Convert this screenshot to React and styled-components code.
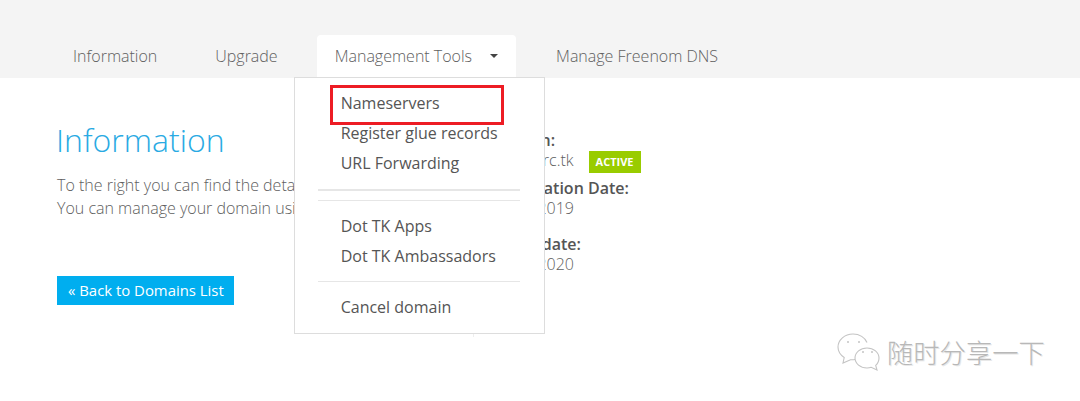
import styled, { createGlobalStyle } from "styled-components";

const GlobalStyle = createGlobalStyle`
    html, body {
        margin: 0;
        background: #fff;
        overflow: hidden;
    }
    body {
        font-family: "Open Sans", "Liberation Sans", "Noto Sans CJK SC", sans-serif;
    }
`

function WeChatIcon() {
    return (
        <svg width="46" height="40" viewBox="0 0 46 40" fill="none" stroke="#c4c4c4" strokeWidth="1.1">
            <path d="M19 27.500c-1.400.3-3 .4-4.500.2L7 31l1.200-5.500C4.500 23 2 19.500 2 15 2 7.800 8.700 2 17 2c6.500 0 12 3.500 14 8.500" />
            <path d="M43 26c0-5.500-5.400-10-12-10s-12 4.500-12 10 5.400 10 12 10c1.500 0 2.900-.2 4.200-.7l5.800 2.700-1.300-4.600C41.700 31.600 43 29 43 26z" />
            <circle cx="12" cy="10" r="1" fill="#c4c4c4" stroke="none" />
            <circle cx="23" cy="10" r="1" fill="#c4c4c4" stroke="none" />
            <circle cx="27" cy="20" r="1" fill="#c4c4c4" stroke="none" />
            <circle cx="36" cy="20" r="1" fill="#c4c4c4" stroke="none" />
        </svg>
    );
}

export default function App() {
    return (
        <Page>
            <GlobalStyle />
            <TabBar>
                <Tab>Information</Tab>
                <Tab>Upgrade</Tab>
                <Tab $active>
                    Management Tools
                    <Caret />
                    <Dropdown>
                        <MenuItem>Nameservers</MenuItem>
                        <MenuItem>Register glue records</MenuItem>
                        <MenuItem>URL Forwarding</MenuItem>
                        <ThickDivider />
                        <ThinDivider />
                        <MenuGap />
                        <MenuItem>Dot TK Apps</MenuItem>
                        <MenuItem>Dot TK Ambassadors</MenuItem>
                        <ThinDivider $after />
                        <MenuItem>Cancel domain</MenuItem>
                        <Highlight />
                    </Dropdown>
                </Tab>
                <Tab>Manage Freenom DNS</Tab>
            </TabBar>
            <Content>
                <LeftColumn>
                    <Heading>Information</Heading>
                    <Description>
                        To the right you can find the details of your domain.<br />
                        You can manage your domain using the tabs above.
                    </Description>
                    <BackButton>« Back to Domains List</BackButton>
                </LeftColumn>
                <RightColumn>
                    <Field>
                        <Label>Domain:</Label>
                        <Value>hxxxxxirc.tk <Badge>ACTIVE</Badge></Value>
                    </Field>
                    <Field>
                        <Label>Registration Date:</Label>
                        <Value>01/12/2019</Value>
                    </Field>
                    <Field $wide>
                        <Label>Expiry date:</Label>
                        <Value>01/12/2020</Value>
                    </Field>
                </RightColumn>
            </Content>
            <Watermark>
                <WeChatIcon />
                <WatermarkText>随时分享一下</WatermarkText>
            </Watermark>
        </Page>
    );
}

const Page = styled.div`
    position: relative;
    width: 1080px;
    height: 401px;
    overflow: hidden;
    background: #fff;
`

const TabBar = styled.nav`
    display: flex;
    align-items: flex-end;
    gap: 22px;
    height: 78px;
    padding-left: 55px;
    box-sizing: border-box;
    background: #f4f4f4;
`

const Tab = styled.div`
    position: relative;
    display: flex;
    align-items: center;
    height: 43px;
    padding: 0 18px 2px;
    margin-left: ${props => props.$active ? "-1px" : "0"};
    box-sizing: border-box;
    font-size: 16px;
    font-weight: 300;
    white-space: nowrap;
    color: #606060;
    border-radius: 4px 4px 0 0;
    background: ${props => props.$active ? "#fff" : "transparent"};
`

const Caret = styled.span`
    width: 0;
    height: 0;
    margin-left: 18px;
    border-left: 4px solid transparent;
    border-right: 4px solid transparent;
    border-top: 4px solid #444;
`

const Dropdown = styled.div`
    position: absolute;
    top: 42px;
    left: -23px;
    width: 251px;
    height: 257px;
    padding-top: 10px;
    box-sizing: border-box;
    background: #fff;
    border: 1px solid #ddd;
    z-index: 2;
`

const MenuItem = styled.div`
    height: 30px;
    padding-left: 46px;
    font-size: 16px;
    line-height: 30px;
    font-weight: 400;
    color: #555;
`

const ThickDivider = styled.div`
    height: 2px;
    margin: 11px 24px 0 23px;
    background: #e6e6e6;
`

const ThinDivider = styled.div`
    height: 1px;
    margin: ${props => props.$after ? "10px 24px 10px 23px" : "9px 24px 0 23px"};
    background: #e6e6e6;
`

const MenuGap = styled.div`
    height: 10px;
`

const Highlight = styled.div`
    position: absolute;
    top: 7px;
    left: 35px;
    width: 174px;
    height: 40px;
    box-sizing: border-box;
    border: 3px solid #ed1c24;
`

const Content = styled.main`
    display: flex;
    padding-left: 57px;
`

const LeftColumn = styled.section`
    width: 416px;
    flex-shrink: 0;
`

const Heading = styled.h1`
    margin: 40px 0 0 -1px;
    font-size: 32px;
    line-height: 44px;
    font-weight: 300;
    color: #29aae3;
`

const Description = styled.p`
    margin: 12px 0 0;
    font-size: 16px;
    line-height: 23px;
    font-weight: 300;
    color: #606060;
    white-space: nowrap;
`

const BackButton = styled.a`
    display: inline-block;
    margin-top: 56px;
    padding: 0 10px 0 11px;
    height: 29px;
    font-size: 14.900px;
    line-height: 29px;
    color: #fff;
    background: #00aeef;
`

const RightColumn = styled.section`
    height: 259px;
    padding: 52px 0 0 16px;
    box-sizing: border-box;
    border-left: 1px solid #eee;
`

const Field = styled.div`
    margin-bottom: ${props => props.$wide ? "0" : "8px"};
    &:nth-child(2) {
        margin-bottom: 16px;
    }
`

const Label = styled.div`
    font-size: 16px;
    line-height: 20px;
    font-weight: 600;
    color: #555;
`

const Value = styled.div`
    display: flex;
    align-items: center;
    height: 20px;
    font-size: 16px;
    font-weight: 300;
    color: #606060;
`

const Badge = styled.span`
    margin: 4px 0 0 15px;
    padding: 0 7px;
    height: 22px;
    font-size: 11px;
    line-height: 22px;
    font-weight: 700;
    color: #fff;
    background: #9c0;
`

const Watermark = styled.div`
    position: absolute;
    top: 332px;
    left: 836px;
    display: flex;
    align-items: center;
    gap: 5px;
`

const WatermarkText = styled.span`
    font-family: "Noto Sans CJK SC", sans-serif;
    font-size: 26.300px;
    line-height: 36px;
    font-weight: 300;
    color: #b8b8b8;
    text-shadow: 1px 1px 0 #e8e8e8;
`
